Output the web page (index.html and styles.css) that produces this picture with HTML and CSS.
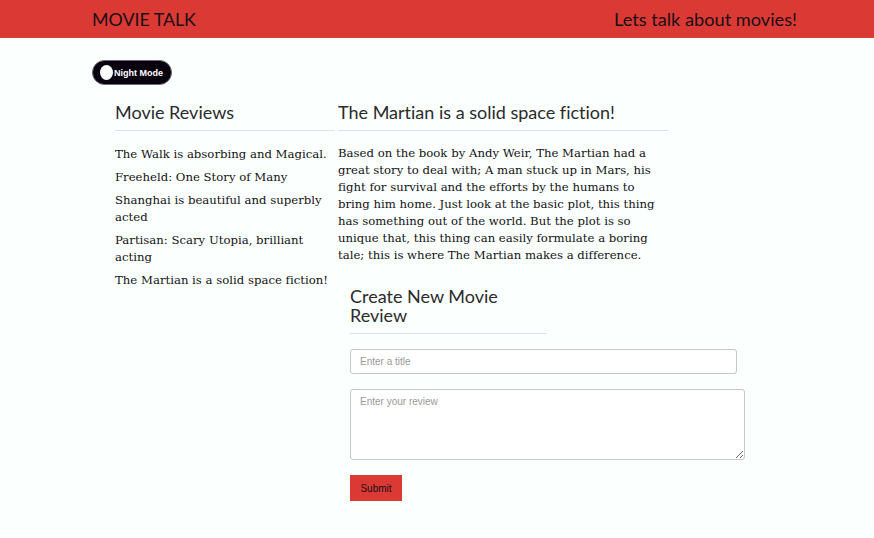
FILE: index.html
```html
<!DOCTYPE html>
<html>
<head>
<meta charset="utf-8">
<title>Movie Talk</title>
<link rel="stylesheet" href="styles.css">
</head>
<body>
<header class="topbar">
  <div class="topbar-inner">
    <div class="brand">MOVIE TALK</div>
    <div class="tagline">Lets talk about movies!</div>
  </div>
</header>
<main class="page">
  <button class="night-toggle" type="button"><span class="knob"></span><span class="night-label">Night Mode</span></button>
  <div class="columns">
    <section class="col-list">
      <h2 class="col-title">Movie Reviews</h2>
      <ul class="review-list">
        <li>The Walk is absorbing and Magical.</li>
        <li>Freeheld: One Story of Many</li>
        <li>Shanghai is beautiful and superbly acted</li>
        <li>Partisan: Scary Utopia, brilliant acting</li>
        <li>The Martian is a solid space fiction!</li>
      </ul>
    </section>
    <section class="col-detail">
      <h2 class="col-title">The Martian is a solid space fiction!</h2>
      <p class="review-body">Based on the book by Andy Weir, The Martian had a great story to deal with; A man stuck up in Mars, his fight for survival and the efforts by the humans to bring him home. Just look at the basic plot, this thing has something out of the world. But the plot is so unique that, this thing can easily formulate a boring tale; this is where The Martian makes a difference.</p>
      <form class="new-review">
        <h2 class="form-title">Create New Movie Review</h2>
        <input class="title-input" type="text" placeholder="Enter a title">
        <textarea class="body-input" placeholder="Enter your review"></textarea>
        <button class="submit-btn" type="button">Submit</button>
      </form>
    </section>
  </div>
</main>
</body>
</html>
```
FILE: styles.css
```css
html, body {
  margin: 0;
  padding: 0;
}
body {
  background: #fbfffe;
  font-family: "DejaVu Serif", serif;
  color: #141214;
  font-variant-ligatures: none;
}
.topbar {
  background: #db3a34;
  height: 38px;
}
.topbar-inner {
  display: flex;
  justify-content: space-between;
  align-items: center;
  height: 38px;
  padding: 0 77px 0 92px;
  font-family: Lato, "Open Sans", sans-serif;
  color: #1a0e16;
  font-size: 18.2px;
}
.brand {
  font-size: 17.8px;
}
.page {
  padding: 22px 0 0 92px;
}
.night-toggle {
  display: flex;
  align-items: center;
  width: 80px;
  height: 25px;
  padding: 0 0 0 7px;
  background: #07020d;
  border: 1px solid #6a6a6a;
  border-radius: 13px;
  color: #fff;
  font-family: "Liberation Sans", Arial, sans-serif;
  font-weight: bold;
  font-size: 9px;
  gap: 1px;
  cursor: pointer;
}
.knob {
  width: 13px;
  height: 15px;
  border-radius: 50%;
  background: #fff;
}
.night-label {
  white-space: nowrap;
}
.columns {
  display: flex;
  margin-top: 14px;
  padding-left: 23px;
}
.col-list {
  width: 220px;
}
.col-detail {
  width: 330px;
  margin-left: 3px;
}
.col-title {
  margin: 0;
  font-family: Lato, "Open Sans", sans-serif;
  font-weight: normal;
  font-size: 18px;
  line-height: 24px;
  color: #2b2b2b;
  padding: 1px 0 6px;
  border-bottom: 1px solid #e2e2e2;
}
.review-list {
  list-style: none;
  margin: 15px 0 0;
  padding: 0;
  font-size: 11.7px;
  line-height: 17px;
}
.review-list li {
  margin-bottom: 6px;
}
.review-body {
  margin: 14px 0 0;
  font-size: 11.7px;
  line-height: 17px;
}
.new-review {
  margin: 23px 0 0 12px;
  width: 395px;
}
.form-title {
  margin: 0;
  width: 197px;
  font-family: Lato, "Open Sans", sans-serif;
  font-weight: normal;
  font-size: 18px;
  line-height: 19px;
  color: #2b2b2b;
  padding-bottom: 8px;
  border-bottom: 1px solid #e2e2e2;
}
.title-input,
.body-input {
  display: block;
  box-sizing: border-box;
  border: 1px solid #c8c8c8;
  border-radius: 3px;
  background: #fff;
  font-family: "Liberation Sans", Arial, sans-serif;
  font-size: 10px;
  color: #333;
  padding: 0 9px;
}
.title-input {
  width: 387px;
  height: 25px;
  margin-top: 15px;
}
.body-input {
  width: 395px;
  height: 71px;
  margin-top: 15px;
  padding-top: 6px;
  resize: vertical;
}
.title-input::placeholder,
.body-input::placeholder {
  color: #9a9a9a;
}
.submit-btn {
  display: block;
  margin-top: 15px;
  width: 52px;
  height: 26px;
  background: #db3a34;
  border: none;
  color: #1a0e16;
  font-family: "Liberation Sans", Arial, sans-serif;
  font-size: 10px;
  padding: 0;
}
```
